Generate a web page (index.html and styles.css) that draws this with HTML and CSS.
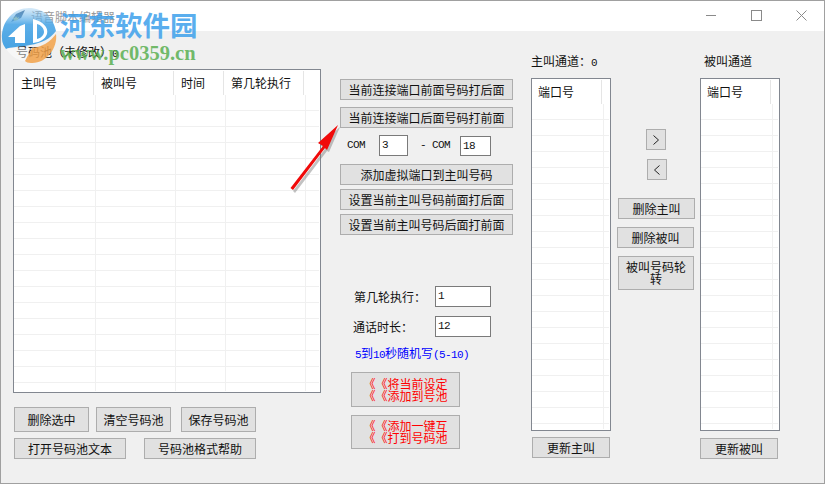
FILE: index.html
```html
<!DOCTYPE html>
<html lang="zh-CN">
<head>
  <meta charset="UTF-8" />
  <title>语音脚本编辑器</title>
  <link rel="stylesheet" href="styles.css">
</head>
<body>
<div class="window">
  <div class="titlebar">
    <svg class="app-icon" width="16" height="16" viewBox="0 0 16 16">
      <path d="M1 14 L6 6 L15 2 L11 10 Z" fill="#3f6690"/>
      <path d="M3 9 l2 1 l1 -2 l1 2 l2 -1 l-1 3 l-4 1 Z" fill="#f0dc78"/>
    </svg>
    <span class="app-title">语音脚本编辑器</span>
    <div class="caption-btns">
      <svg width="11" height="11" viewBox="0 0 11 11"><path d="M0 5.5 H10" stroke="#8a8a8a" fill="none"/></svg>
      <svg width="11" height="11" viewBox="0 0 11 11"><rect x="0.5" y="0.5" width="10" height="10" stroke="#8a8a8a" fill="none"/></svg>
      <svg width="11" height="11" viewBox="0 0 11 11"><path d="M0.5 0.5 L10.5 10.5 M10.5 0.5 L0.5 10.5" stroke="#8a8a8a" fill="none"/></svg>
    </div>
  </div>

  <div class="client">
    <!-- 号码池 -->
    <div class="col-pool">
      <div class="cap">号码池（未修改）<span class="latin">0</span></div>
      <div class="grid pool-grid">
        <div class="grid-head">
          <div class="hd w80">主叫号</div>
          <div class="hd w80">被叫号</div>
          <div class="hd w50">时间</div>
          <div class="hd w80">第几轮执行</div>
        </div>
        <div class="grid-body pool-body"></div>
      </div>
      <div class="pool-row1">
        <button class="btn w75">删除选中</button>
        <button class="btn w75">清空号码池</button>
        <button class="btn w75 save-btn">保存号码池</button>
      </div>
      <div class="pool-row2">
        <button class="btn w112">打开号码池文本</button>
        <button class="btn w112">号码池格式帮助</button>
      </div>
    </div>

    <!-- 中间设置 -->
    <div class="col-setup">
      <button class="btn setup-btn">当前连接端口前面号码打后面</button>
      <button class="btn setup-btn gap7">当前连接端口后面号码打前面</button>
      <div class="com-row">
        <span class="latin">COM</span>
        <div class="field com-from">3</div>
        <span class="latin com-to">- COM</span>
        <div class="field com-end">18</div>
      </div>
      <button class="btn setup-btn gap8">添加虚拟端口到主叫号码</button>
      <button class="btn setup-btn gap4">设置当前主叫号码前面打后面</button>
      <button class="btn setup-btn gap4">设置当前主叫号码后面打前面</button>

      <div class="form-row first">
        <label class="form-label">第几轮执行：</label>
        <div class="field form-input">1</div>
      </div>
      <div class="form-row">
        <label class="form-label tight">通话时长：</label>
        <div class="field form-input">12</div>
      </div>
      <div class="hint"><span class="latin">5</span>到<span class="latin">10</span>秒随机写<span class="latin">(5-10)</span></div>
      <button class="btn red-btn first">《《将当前设定<br>《《添加到号池</button>
      <button class="btn red-btn">《《添加一键互<br>《《打到号码池</button>
    </div>

    <!-- 主叫通道 -->
    <div class="col-chan">
      <div class="cap chan-cap">主叫通道：<span class="latin">0</span></div>
      <div class="grid chan-grid">
        <div class="grid-head chan-head"><div class="hd w70">端口号</div></div>
        <div class="grid-body chan-body"></div>
      </div>
      <button class="btn update-a">更新主叫</button>
    </div>

    <!-- 通道操作 -->
    <div class="col-move">
      <button class="btn move-btn right"><svg width="8" height="12" viewBox="0 0 8 12"><path d="M1.5 1.5 L6.5 6 L1.5 10.5" fill="none" stroke="#222"/></svg></button>
      <button class="btn move-btn left"><svg width="8" height="12" viewBox="0 0 8 12"><path d="M6.5 1.5 L1.5 6 L6.5 10.5" fill="none" stroke="#222"/></svg></button>
      <button class="btn del-a">删除主叫</button>
      <button class="btn del-b">删除被叫</button>
      <button class="btn rotate">被叫号码轮转</button>
    </div>

    <!-- 被叫通道 -->
    <div class="col-chan chan-b">
      <div class="cap chan-cap cap-b">被叫通道</div>
      <div class="grid chan-grid">
        <div class="grid-head chan-head"><div class="hd w70">端口号</div></div>
        <div class="grid-body chan-body"></div>
      </div>
      <button class="btn update-b">更新被叫</button>
    </div>
  </div>
</div>

<!-- 水印 -->
<svg class="logo" width="60" height="64" viewBox="0 0 60 64">
  <defs>
    <linearGradient id="logoBlue" x1="0" y1="0" x2="0" y2="1">
      <stop offset="0" stop-color="#8fc6ee" stop-opacity=".35"/>
      <stop offset=".4" stop-color="#4ba6e6" stop-opacity=".9"/>
      <stop offset="1" stop-color="#3f9fe2" stop-opacity=".95"/>
    </linearGradient>
  </defs>
  <path d="M2 38 C1 20 14 7 29 7 C43 7 53 16 56 30 C50 38 42 42 30 44 C20 46 10 46 6 48 C4 45 2 42 2 38 Z" fill="url(#logoBlue)"/>
  <path d="M8 36 L20 25 L25 23 L25 42 L15 42 L15 36 Z" fill="#fff"/>
  <path d="M33 18 C42 20 49 26 47 33 C45 38 41 41 33 42 Z M37 23 L37 38 C41 37 44 34 44 31 C44 27 41 24 37 23 Z" fill="#fff" fill-rule="evenodd"/>
  <path d="M6 48 C12 56 18 60 25 60 L31 47 C20 47 12 46 6 48 Z" fill="#fff" fill-opacity=".45"/>
  <path d="M56 33 C58 47 46 63 31 62 C28 62 26 61 25 60 L32 47 C42 46 50 41 56 33 Z" fill="#f2a24a" fill-opacity=".85"/>
</svg>
<div class="wm-title">河东软件园</div>
<div class="wm-url">www.pc0359.cn</div>

<!-- 红色箭头 -->
<svg class="arrow" width="70" height="80" viewBox="0 0 70 80">
  <path d="M11 69 L43 27 L38 23 L58 5 L47 30 L45 29 L13 71 Z" fill="#777" fill-opacity=".45" transform="translate(2 2)"/>
  <path d="M10.5 68 L43 26 L38 23 L58 5 L47 30 L45 28 L13 70 Z" fill="#f00a0a"/>
</svg>
</body>
</html>
```

FILE: styles.css
```css
* {
  box-sizing: border-box;
}
body {
  margin: 0;
  font-family: "Noto Sans CJK SC", "Liberation Sans", sans-serif;
  font-size: 12px;
  color: #111;
  overflow: hidden;
  text-spacing-trim: space-all;
}
.window {
  position: relative;
  width: 825px;
  height: 484px;
  border: 1px solid #a0a0a0;
  background: #f0f0f0;
  overflow: hidden;
}
.latin {
  font-family: "Liberation Mono", monospace;
  font-size: 11px;
  letter-spacing: -.6px;
}

/* title bar */
.titlebar {
  display: flex;
  align-items: center;
  height: 30px;
  padding-left: 9px;
  background: #fff;
}
.app-title {
  margin-left: 5px;
  color: #999;
}
.caption-btns {
  display: flex;
  gap: 34px;
  margin: 0 17px 1px auto;
}

/* columns */
.client {
  display: flex;
  align-items: flex-start;
}
.col-pool {
  width: 308px;
  margin-left: 12px;
}
.col-setup {
  width: 173px;
  margin-left: 19px;
  padding-top: 48px;
}
.col-chan {
  width: 80px;
  margin-left: 18px;
}
.chan-b {
  margin-left: 5px;
}
.col-move {
  width: 78px;
  margin-left: 6px;
  padding-top: 98px;
}
.cap {
  height: 16px;
  line-height: 16px;
  white-space: nowrap;
}
.col-pool .cap {
  margin-top: 13px;
  padding-left: 3px;
}
.chan-cap {
  margin-top: 22px;
}
.cap-b {
  padding-left: 4px;
}

/* buttons */
.btn {
  display: block;
  height: 21px;
  padding: 0;
  border: 1px solid #adadad;
  background: #e1e1e1;
  font: inherit;
  color: #111;
  line-height: 13px;
}
.w75 { width: 75px; height: 25px; }
.w112 { width: 112px; }

/* grids */
.grid {
  border: 1px solid #828790;
  background: #fff;
  padding: 1px 1px 1px 0;
}
.pool-grid {
  width: 308px;
  height: 324px;
  margin-top: 9px;
}
.grid-head {
  display: flex;
  height: 24px;
}
.hd {
  padding-left: 7px;
  line-height: 24px;
  border-right: 1px solid #e5e5e5;
}
.chan-head .hd {
  padding-left: 6px;
}
.w80 { width: 80px; }
.w50 { width: 50px; }
.w70 { width: 70px; }
.grid-body {
  background-image:
    linear-gradient(#f0f0f0, #f0f0f0),
    repeating-linear-gradient(transparent 0 15px, #f0f0f0 15px 16px);
  background-repeat: no-repeat, repeat;
}
.pool-body {
  height: 296px;
  background-image:
    linear-gradient(#f0f0f0, #f0f0f0),
    linear-gradient(#f0f0f0, #f0f0f0),
    linear-gradient(#f0f0f0, #f0f0f0),
    linear-gradient(#f0f0f0, #f0f0f0),
    repeating-linear-gradient(transparent 0 15px, #f0f0f0 15px 16px);
  background-repeat: no-repeat, no-repeat, no-repeat, no-repeat, repeat;
  background-size: 1px 100%, 1px 100%, 1px 100%, 1px 100%, auto;
  background-position: 81px 0, 161px 0, 211px 0, 291px 0, 0 0;
}
.chan-grid {
  height: 353px;
  margin-top: 9px;
}
.chan-body {
  height: 325px;
  background-size: 1px 100%, auto;
  background-position: 71px 0, 0 0;
}

/* pool buttons */
.pool-row1 {
  display: flex;
  gap: 7px;
  margin-top: 14px;
  padding-left: 1px;
}
.save-btn {
  margin-left: 3px;
}
.pool-row2 {
  display: flex;
  justify-content: space-between;
  width: 243px;
  margin-top: 6px;
  padding-left: 1px;
}

/* setup column */
.setup-btn {
  width: 173px;
}
.gap7 { margin-top: 7px; }
.gap8 { margin-top: 8px; }
.gap4 { margin-top: 4px; }
.com-row {
  display: flex;
  align-items: flex-start;
  height: 21px;
  margin-top: 7px;
  padding-left: 7px;
  line-height: 21px;
}
.field {
  height: 21px;
  border: 1px solid #7a7a7a;
  background: #fff;
  padding-left: 2px;
  font-family: "Liberation Mono", monospace;
  font-size: 11px;
  letter-spacing: -.6px;
  line-height: 18px;
}
.com-from {
  width: 29px;
  margin-left: 14px;
}
.com-to {
  margin-left: 12px;
}
.com-end {
  width: 31px;
  height: 20px;
  margin: 1px 0 0 10px;
}
.form-row {
  display: flex;
  align-items: center;
  height: 21px;
  margin-top: 9px;
  padding-left: 14px;
}
.form-row.first {
  margin-top: 51px;
}
.form-label {
  width: 81px;
}
.form-label.tight {
  margin-left: -1px;
  width: 82px;
}
.form-input {
  width: 56px;
}
.hint {
  margin-top: 8px;
  padding-left: 15px;
  height: 16px;
  line-height: 16px;
  color: #0000ff;
}
.red-btn {
  width: 109px;
  height: 34px;
  margin: 8px 0 0 11px;
  color: #f00;
  line-height: 12px;
}
.red-btn.first {
  height: 35px;
  margin-top: 11px;
}

/* channel buttons */
.update-a {
  width: 78px;
  margin: 6px 0 0 1px;
}
.update-b {
  width: 78px;
  margin-top: 7px;
}
.move-btn {
  width: 20px;
  display: flex;
  align-items: center;
  justify-content: center;
}
.move-btn.right {
  margin-left: 29px;
}
.move-btn.left {
  margin: 9px 0 0 30px;
}
.del-a {
  width: 77px;
  margin: 18px 0 0 1px;
}
.del-b {
  width: 77px;
  margin-top: 8px;
}
.rotate {
  width: 76px;
  height: 34px;
  margin: 8px 0 0 1px;
  padding: 0 7px;
  line-height: 12px;
}

/* watermark and arrow over the window */
.logo {
  position: absolute;
  left: 0;
  top: 1px;
}
.wm-title {
  position: absolute;
  left: 60px;
  top: 5px;
  font-size: 27.5px;
  font-weight: 700;
  line-height: 38px;
  color: rgba(60, 160, 235, .85);
  white-space: nowrap;
}
.wm-url {
  position: absolute;
  left: 60px;
  top: 42px;
  font-family: "Liberation Serif", serif;
  font-size: 20.5px;
  font-weight: 700;
  line-height: 22px;
  color: rgba(90, 175, 80, .85);
  white-space: nowrap;
}
.arrow {
  position: absolute;
  left: 280px;
  top: 120px;
}
```
